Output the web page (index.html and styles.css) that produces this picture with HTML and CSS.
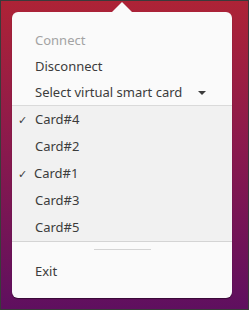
FILE: index.html
```html
<!DOCTYPE html>
<html lang="en">
<head>
  <meta charset="UTF-8">
  <title>Smart Card Menu</title>
  <link rel="stylesheet" href="styles.css">
</head>
<body>

  <div class="desktop">
    <div class="menu">
      <div class="item disabled">Connect</div>
      <div class="item">Disconnect</div>
      <div class="item expander">
        <span>Select virtual smart card</span>
        <span class="arrow"></span>
      </div>

      <div class="submenu">
        <div class="card checked">Card#4</div>
        <div class="card">Card#2</div>
        <div class="card checked glitch">Card#1</div>
        <div class="card">Card#3</div>
        <div class="card">Card#5</div>
      </div>

      <div class="separator"></div>

      <div class="item">Exit</div>
    </div>
  </div>

</body>
</html>
```

FILE: styles.css
```css
body {
  margin: 0;
  font-family: "Noto Sans", sans-serif;
  font-size: 13px;
  color: #3c3c3c;
}

.desktop {
  width: 249px;
  height: 310px;
  box-sizing: border-box;
  border: 1px solid #3a3a3a;
  padding: 11px 0 0 11px;
  background: linear-gradient(to bottom, #ad2336 0%, #8c1a4c 45%, #5f0f5f 100%);
}

.menu {
  position: relative;
  width: 220px;
  height: 286px;
  box-sizing: border-box;
  padding-top: 15px;
  background: #fafafa;
  border-radius: 6px;
  box-shadow: 0 1px 1px rgba(0,0,0,0.45);
}

/* popover pointer */
.menu::before {
  content: "";
  position: absolute;
  top: -10px;
  left: 100px;
  border-left: 10px solid transparent;
  border-right: 10px solid transparent;
  border-bottom: 10px solid #fafafa;
}

.item {
  height: 26px;
  line-height: 26px;
  padding-left: 23px;
}

.disabled {
  color: #a3a3a3;
}

.expander {
  display: flex;
  align-items: center;
  justify-content: space-between;
  padding-right: 26px;
}

.arrow {
  width: 0;
  height: 0;
  margin-top: 2px;
  border-left: 4px solid transparent;
  border-right: 4px solid transparent;
  border-top: 4px solid #3c3c3c;
}

.submenu {
  background: #f1f1f1;
  border-top: 1px solid #dadada;
  border-bottom: 1px solid #d4d4d4;
}

.card {
  position: relative;
  height: 27px;
  line-height: 27px;
  padding-left: 23px;
}

.card.checked::before {
  content: "\2713";
  position: absolute;
  left: 6px;
  font-size: 11px;
}

.card.glitch {
  padding-left: 22px;
}

.separator {
  width: 57px;
  height: 1px;
  margin: 7px auto 8px;
  background: #d4d4d4;
}
```
